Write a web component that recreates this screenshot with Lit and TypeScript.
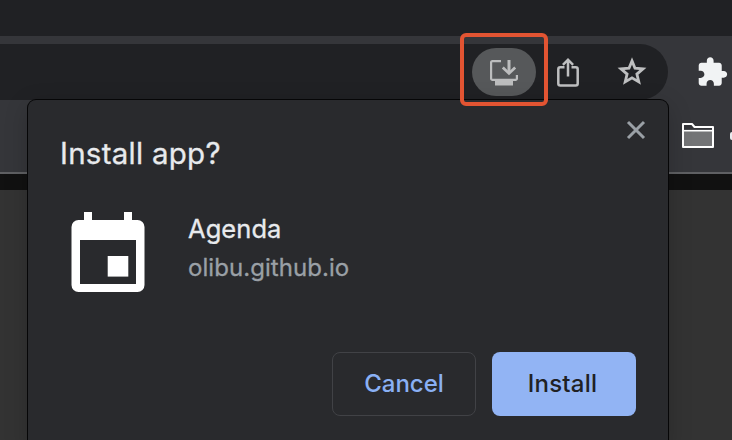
import { LitElement, html, css } from "lit";
import { customElement } from "lit/decorators.js";

@customElement("install-dialog")
class InstallDialog extends LitElement {
  static styles = css`
    :host {
      box-sizing: border-box;
      display: block;
      padding: 20px 32px 0;
      background: #292a2d;
      border-radius: 8px 8px 0 0;
      box-shadow: 0 0 0 1px #060607, 0 6px 24px rgba(0, 0, 0, 0.2);
      font-family: Inter, "Liberation Sans", sans-serif;
      color: #e8eaed;
    }
    .head { display: flex; justify-content: space-between; height: 72px; }
    .title { margin: 13px 0 0; font-size: 29.5px; font-weight: 400; line-height: 40px; letter-spacing: 0.26px; white-space: nowrap; -webkit-text-stroke: 0.3px currentColor; }
    .close { width: 20px; height: 20px; margin-right: -10px; display: block; }
    .app { display: flex; gap: 43px; padding-left: 11px; height: 160px; }
    .icon { width: 74px; height: 82px; margin-top: 19px; display: block; }
    .info { padding-top: 20px; letter-spacing: 0.06px; -webkit-text-stroke: 0.3px currentColor; }
    .name { font-size: 25.5px; line-height: 34px; white-space: nowrap; }
    .origin { margin-top: 5px; font-size: 24px; line-height: 34px; color: #9aa0a6; white-space: nowrap; }
    .actions { display: flex; justify-content: flex-end; gap: 16px; }
    .btn {
      box-sizing: border-box;
      width: 144px;
      height: 64px;
      padding: 0 0 2px;
      border: 1px solid #414246;
      border-radius: 8px;
      background: transparent;
      color: #8ab0f4;
      font: 500 24px Inter, "Liberation Sans", sans-serif;
      white-space: nowrap;
    }
    .primary { border: 0; background: #92b4f4; color: #202124; padding-right: 3px; letter-spacing: 0.2px; }
  `;

  render() {
    return html`
      <div class="head">
        <h1 class="title"><span>Install app?</span></h1>
        <svg class="close" viewBox="0 0 20 20" fill="none" stroke="#9aa0a6" stroke-width="3">
          <path d="M2 2 18 18M18 2 2 18" />
        </svg>
      </div>
      <div class="app">
        <svg class="icon" viewBox="0 0 74 82" fill="#fff">
          <path fill-rule="evenodd" d="M13 1h8v8h32V1h8v8h5.5a7 7 0 0 1 7 7v58a7 7 0 0 1-7 7h-59a7 7 0 0 1-7-7V16a7 7 0 0 1 7-7H13zM9 29v44h56V29z" />
          <path d="M36.7 45h20.6v20.6H36.7z" />
        </svg>
        <div class="info">
          <div class="name"><span>Agenda</span></div>
          <div class="origin"><span>olibu.github.io</span></div>
        </div>
      </div>
      <div class="actions">
        <button class="btn">Cancel</button>
        <button class="btn primary">Install</button>
      </div>
    `;
  }
}

@customElement("app-root")
class AppRoot extends LitElement {
  static styles = css`
    :host { display: block; position: relative; width: 732px; height: 440px; overflow: hidden; background: #333; }
    svg { display: block; flex: none; }
    .tabs { height: 36px; background: #202124; }
    .chrome { box-sizing: border-box; height: 138px; padding-top: 8px; background: #35363a; border-bottom: 2px solid #5f6063; }
    .toolbar { display: flex; align-items: center; height: 56px; }
    .omnibox {
      box-sizing: border-box;
      width: 668px;
      height: 56px;
      padding-right: 20px;
      display: flex;
      align-items: center;
      justify-content: flex-end;
      background: #202124;
      border-radius: 0 28px 28px 0;
    }
    .install { width: 64px; height: 48px; border-radius: 24px; background: #56585a; }
    .share { width: 24px; height: 32px; margin-left: 20px; }
    .star { width: 32px; height: 32px; margin-left: 36px; }
    .puzzle { width: 32.5px; height: 32.5px; margin-left: 27.5px; }
    .bookmarks { display: flex; align-items: center; justify-content: flex-end; height: 72px; gap: 15px; }
    .folder { width: 34px; height: 28px; }
    .next { width: 2px; height: 8px; border-radius: 4px 0 0 4px; background: #e8eaed; }
    .band { height: 16px; background: #111; }
    .dialog { position: absolute; left: 28px; top: 100px; width: 640px; height: 348px; }
    .highlight { position: absolute; box-sizing: border-box; left: 460px; top: 33px; width: 88px; height: 73px; border: 4px solid #e25432; border-radius: 6px; }
  `;

  render() {
    return html`
      <div class="tabs"></div>
      <div class="chrome">
        <div class="toolbar">
          <div class="omnibox">
            <svg class="install" viewBox="0 0 64 48" fill="none" stroke="#bcbdbe" stroke-width="2.2">
              <path d="M29 13.1H20.5a1.4 1.4 0 0 0-1.4 1.4V30.5a1.4 1.4 0 0 0 1.4 1.4H43.5a1.4 1.4 0 0 0 1.4-1.4V27" />
              <path d="M37 12V25" stroke-width="3" />
              <path d="m30.8 19.4 6.2 6 6.2-6" stroke-width="2.8" />
              <path d="M23 32h18v5.5H23z" fill="#bcbdbe" stroke="none" />
            </svg>
            <svg class="share" viewBox="0 0 24 32" fill="none" stroke="#bebfc0" stroke-width="2.5">
              <path d="M8.5 11.2H4.3a2 2 0 0 0-2 2V27.5a2 2 0 0 0 2 2H19.7a2 2 0 0 0 2-2V13.2a2 2 0 0 0-2-2H15.5" />
              <path d="M12 20.5V4M6.9 8.8 12 3.7l5.1 5.1" />
            </svg>
            <svg class="star" viewBox="0 0 32 32" fill="none" stroke="#bebfc0" stroke-width="2.8">
              <path d="M16 4.9 19 12.2l8 .7-6.1 5.2 1.9 7.8L16 21.8l-6.8 4.1 1.9-7.8-6.1-5.2 8-.7z" />
            </svg>
          </div>
          <svg class="puzzle" viewBox="0 0 24 24" fill="#f1f3f4">
            <path d="M20.5 11H19V7c0-1.1-.9-2-2-2h-4V3.5C13 2.12 11.88 1 10.5 1S8 2.12 8 3.5V5H4c-1.1 0-1.99.9-1.99 2v3.8H3.5c1.49 0 2.7 1.21 2.7 2.7s-1.21 2.7-2.7 2.7H2V20c0 1.1.9 2 2 2h3.8v-1.5c0-1.49 1.21-2.7 2.7-2.7s2.7 1.21 2.7 2.7V22H17c1.1 0 2-.9 2-2v-4h1.5c1.38 0 2.5-1.12 2.5-2.5S21.88 11 20.5 11z" />
          </svg>
        </div>
        <div class="bookmarks">
          <svg class="folder" viewBox="0 0 34 28" fill="none" stroke="#fff" stroke-width="2">
            <path d="M2 9h30v16H2z" fill="#737476" stroke="none" />
            <path d="M2 25V2h9l2.5 3H32v20z" stroke-linejoin="round" />
            <path d="M2 8.7h30" stroke-width="1.6" />
          </svg>
          <div class="next"></div>
        </div>
      </div>
      <div class="band"></div>
      <install-dialog class="dialog"></install-dialog>
      <div class="highlight"></div>
    `;
  }
}
